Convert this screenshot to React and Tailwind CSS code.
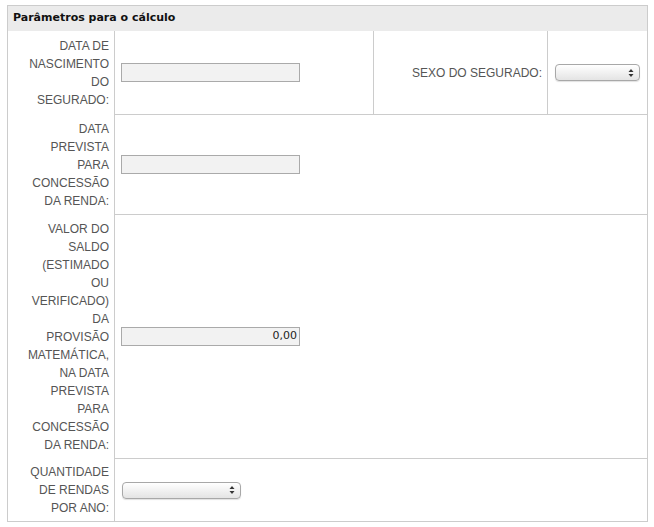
import React from "react";

const labelCls =
  "w-[107px] shrink-0 border-r border-[#cccccc] pr-[5px] text-right text-[12px] leading-[18px] text-[#555555] font-['Liberation_Sans',Arial,sans-serif]";

function TextBox({ value = "" }) {
  return (
    <div className="flex h-[19px] w-[179px] items-center justify-end border border-[#aaaaaa] bg-[#f2f2f2] pr-[2px] text-[11px] text-[#222222] font-['DejaVu_Sans',Verdana,sans-serif]">
      {value}
    </div>
  );
}

function SelectBox({ width }) {
  return (
    <div
      className="flex h-[17px] items-center justify-end rounded-[4px] border border-[#a8a8a8] bg-gradient-to-b from-[#ffffff] to-[#e4e4e4] pr-[5px] shadow-[0_1px_1px_rgba(0,0,0,0.12)]"
      style={{ width }}
    >
      <svg width="6" height="10" viewBox="0 0 6 10">
        <path d="M3 1 L5.5 4 L0.5 4 Z" fill="#333333" />
        <path d="M3 9 L5.5 6 L0.5 6 Z" fill="#333333" />
      </svg>
    </div>
  );
}

export default function App() {
  return (
    <div className="min-h-screen bg-white pt-[5px] pl-[7px]">
      <div className="w-[641px] border border-[#cccccc]">
        <div className="flex h-[25px] items-center bg-[#ebebeb] pl-[5px] text-[11px] font-bold text-[#111111] font-['DejaVu_Sans',Verdana,sans-serif]">
          Parâmetros para o cálculo
        </div>

        <div className="flex">
          <div className={`${labelCls} py-[6px]`}>
            DATA DE
            <br />
            NASCIMENTO
            <br />
            DO
            <br />
            SEGURADO:
          </div>
          <div className="flex flex-1 border-b border-[#cccccc]">
            <div className="flex w-[259px] items-center border-r border-[#cccccc] pl-[6px]">
              <TextBox />
            </div>
            <div className="flex w-[174px] items-center justify-end border-r border-[#cccccc] pr-[5px] text-[12px] text-[#555555] font-['Liberation_Sans',Arial,sans-serif]">
              SEXO DO SEGURADO:
            </div>
            <div className="flex flex-1 items-center pl-[7px]">
              <SelectBox width={85} />
            </div>
          </div>
        </div>

        <div className="flex">
          <div className={`${labelCls} py-[5px]`}>
            DATA
            <br />
            PREVISTA
            <br />
            PARA
            <br />
            CONCESSÃO
            <br />
            DA RENDA:
          </div>
          <div className="flex flex-1 items-center border-b border-[#cccccc] pl-[6px]">
            <TextBox />
          </div>
        </div>

        <div className="flex">
          <div className={`${labelCls} py-[5px]`}>
            VALOR DO
            <br />
            SALDO
            <br />
            (ESTIMADO
            <br />
            OU
            <br />
            VERIFICADO)
            <br />
            DA
            <br />
            PROVISÃO
            <br />
            MATEMÁTICA,
            <br />
            NA DATA
            <br />
            PREVISTA
            <br />
            PARA
            <br />
            CONCESSÃO
            <br />
            DA RENDA:
          </div>
          <div className="flex flex-1 items-center border-b border-[#cccccc] pl-[6px]">
            <TextBox value="0,00" />
          </div>
        </div>

        <div className="flex">
          <div className={`${labelCls} py-[4px]`}>
            QUANTIDADE
            <br />
            DE RENDAS
            <br />
            POR ANO:
          </div>
          <div className="flex flex-1 items-center pl-[7px]">
            <SelectBox width={119} />
          </div>
        </div>
      </div>
    </div>
  );
}
